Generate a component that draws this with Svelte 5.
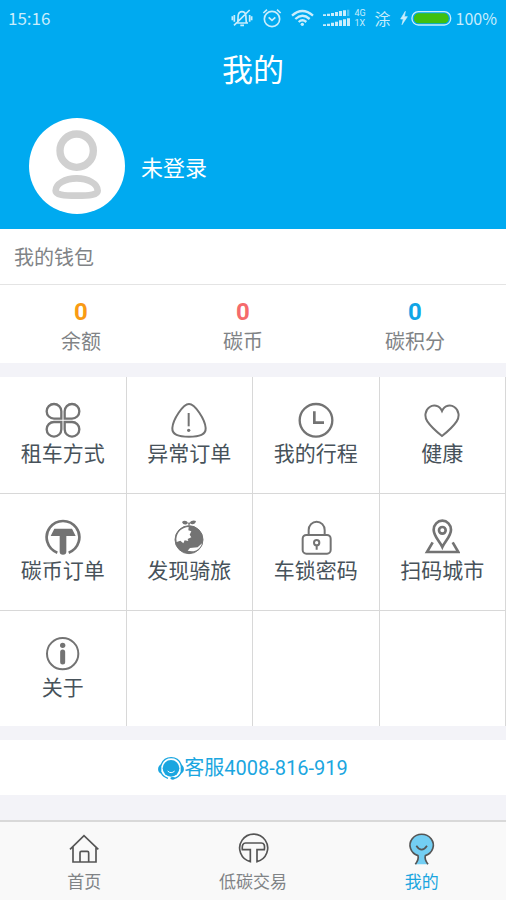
<svelte:head>
    <title>我的</title>
</svelte:head>

<script>
    const wallet = [
        { name: '余额', value: 0, color: 'orange' },
        { name: '碳币', value: 0, color: 'red' },
        { name: '碳积分', value: 0, color: 'blue' },
    ];

    const menu = [
        { name: '租车方式', icon: 'clover' },
        { name: '异常订单', icon: 'alert' },
        { name: '我的行程', icon: 'clock' },
        { name: '健康', icon: 'heart' },
        { name: '碳币订单', icon: 'coin' },
        { name: '发现骑旅', icon: 'globe' },
        { name: '车锁密码', icon: 'lock' },
        { name: '扫码城市', icon: 'pin' },
        { name: '关于', icon: 'info' },
        null,
        null,
        null,
    ];

    const tabs = [
        { name: '首页', icon: 'home' },
        { name: '低碳交易', icon: 'trade' },
        { name: '我的', icon: 'me' },
    ];

    let active = $state('me');
</script>

<div class="page">

    <header>
        <div class="status">
            <span class="time">15:16</span>
            <svg class="bell" viewBox="0 0 66 60" fill="none" stroke="currentColor" stroke-width="5">
                <path d="M15 45H51M19 45C22 40 20 30 22 20C25 8 41 8 44 20C46 30 44 40 47 45M28 52H39M9 52L56 6" />
                <path d="M4 25V37M10 21V41M56 21V41M62 25V37" />
            </svg>
            <svg class="alarm" viewBox="0 0 60 60" fill="none" stroke="currentColor" stroke-width="5">
                <circle cx="30" cy="33" r="23" />
                <path d="M20 28L30 37L40 28M4 15L15 5M45 5L56 15" />
            </svg>
            <svg class="wifi" viewBox="0 0 69 54" fill="none" stroke="currentColor" stroke-width="7">
                <path d="M3 20Q34 -8 66 20M13 30Q34 11 56 30M23 39Q34 29 46 39" />
                <circle cx="34" cy="46" r="5" fill="currentColor" stroke="none" />
            </svg>
            <div class="signal">
                <svg viewBox="0 0 81 54" fill="currentColor">
                    <path d="M0 16h9v5H0zM12 14h9v7h-9zM24 12h9v9h-9zM36 9h9v12h-9zM48 6h9v15h-9zM60 4h9v17h-9z" />
                    <path d="M72 2h7v19h-7z" opacity=".4" />
                    <path d="M0 46h9v5H0zM12 44h9v7h-9zM24 41h9v10h-9zM36 38h9v13h-9zM48 34h9v17h-9zM60 31h9v20h-9zM72 28h9v23h-9z" />
                </svg>
                <div class="network">
                    <span>4G</span>
                    <span>1X</span>
                </div>
            </div>
            <span class="carrier">涂</span>
            <div class="battery">
                <svg viewBox="0 0 156 48">
                    <path d="M16 4L2 27H10L6 44L22 20H13Z" fill="currentColor" stroke="currentColor" stroke-width="2" />
                    <rect x="36" y="5" width="116" height="40" rx="19" fill="none" stroke="currentColor" stroke-width="4" />
                    <rect x="42" y="10" width="104" height="30" rx="14" fill="#3fc010" />
                </svg>
                <span>100%</span>
            </div>
        </div>

        <h1>我的</h1>

        <button class="profile">
            <svg class="avatar" viewBox="0 0 288 288" fill="none" stroke="#d0d0d0">
                <circle cx="144" cy="144" r="144" fill="#fff" stroke="none" />
                <circle cx="143" cy="98" r="50" stroke-width="22" />
                <path d="M80 218C80 198 108 181 143 181C178 181 206 198 206 218C206 230 182 233 143 233C104 233 80 230 80 218Z" stroke-width="20" />
            </svg>
            <span>未登录</span>
        </button>
    </header>

    <main>
        <section class="wallet">
            <h2>我的钱包</h2>
            <div class="amounts">
                {#each wallet as item}
                    <button class="amount">
                        <strong class={item.color}>{item.value}</strong>
                        <span>{item.name}</span>
                    </button>
                {/each}
            </div>
        </section>

        <section class="menu">
            {#each menu as item}
                {#if item}
                    <button class="cell">
                        <svg viewBox="0 0 108 108" fill="none" stroke="currentColor" stroke-width="6">
                            {#if item.icon == 'clover'}
                                <path d="M49 50H27A22 22 0 1 1 49 28ZM59 50V28A22 22 0 1 1 81 50ZM49 60V82A22 22 0 1 1 27 60ZM59 60H81A22 22 0 1 1 59 82Z" stroke-width="7" />
                            {:else if item.icon == 'alert'}
                                <path d="M54 6C72 6 102 52 104 78C105 98 86 104 54 104C22 104 3 98 4 78C6 52 36 6 54 6Z" />
                                <path d="M53 33V73" />
                                <circle cx="53" cy="85" r="5" fill="currentColor" stroke="none" />
                            {:else if item.icon == 'clock'}
                                <circle cx="54" cy="55" r="49" stroke-width="7" />
                                <path d="M49 28V62H78" stroke-width="8" />
                            {:else if item.icon == 'heart'}
                                <path d="M54 27C46 8 27 8 17 15C2 25 1 45 10 58C18 70 34 86 54 102C74 86 90 70 98 58C107 45 106 25 91 15C81 8 62 8 54 27Z" />
                            {:else if item.icon == 'coin'}
                                <path d="M37 101A49 49 0 1 1 71 101" stroke-width="8" />
                                <path d="M28 29H81L92 51H64V98Q64 107 54 107Q44 107 44 98V51H17Z" fill="currentColor" stroke="none" />
                            {:else if item.icon == 'globe'}
                                <circle cx="54" cy="62" r="42" fill="currentColor" stroke-width="3" />
                                <path d="M16 60C18 38 34 25 53 24L52 34L61 37L56 47L61 55L50 60L52 66L41 64L37 73L28 65L17 69ZM50 95L57 87L80 85L93 73C88 90 74 98 62 97Z" fill="#fff" stroke="none" />
                                <path d="M54 20C50 14 51 12 54 10C58 12 58 15 54 20ZM51 12C45 19 36 18 33 9C39 3 48 5 51 12ZM56 12C60 4 69 3 75 6C73 16 63 19 56 12Z" fill="currentColor" stroke="none" />
                            {:else if item.icon == 'lock'}
                                <rect x="14" y="48" width="84" height="56" rx="11" />
                                <path d="M32 48V33A24 25 0 0 1 80 33V48M56 79V92" />
                                <circle cx="56" cy="71" r="8" />
                            {:else if item.icon == 'pin'}
                                <path d="M55 84C48 68 29 52 29 32A26 27 0 0 1 81 32C81 52 62 68 55 84Z" stroke-width="8" />
                                <circle cx="55" cy="34" r="10" stroke-width="8" />
                                <path d="M26 70L9 99H103L86 70" stroke-width="8" />
                            {:else}
                                <circle cx="53" cy="53" r="47" />
                                <circle cx="53" cy="28" r="8" fill="currentColor" stroke="none" />
                                <path d="M53 48V78" stroke-width="15" stroke-linecap="round" />
                            {/if}
                        </svg>
                        <span>{item.name}</span>
                    </button>
                {:else}
                    <div class="cell"></div>
                {/if}
            {/each}
        </section>

        <a class="service" href="tel:4008816919">
            <svg viewBox="0 0 78 72" fill="none" stroke="currentColor" stroke-width="4">
                <path d="M9 26C18 -6 61 -6 70 26M70 46C65 57 57 63 46 65M9 46C13 56 20 61 30 64" />
                <circle cx="39" cy="34" r="25" fill="currentColor" stroke="none" />
                <path d="M10 22V50C-3 46 -3 27 10 22ZM68 22V50C81 46 81 27 68 22Z" fill="currentColor" stroke="none" />
                <ellipse cx="44" cy="64" rx="7" ry="4" fill="currentColor" stroke="none" />
                <path d="M29 42Q39 52 50 42" stroke="#fff" stroke-width="3" />
            </svg>
            <span>客服4008-816-919</span>
        </a>
    </main>

    <nav>
        {#each tabs as tab}
            <a href="#{tab.icon}" class:active={active == tab.icon} onclick={() => active = tab.icon}>
                <svg viewBox="0 0 96 96" fill="none" stroke="#555" stroke-width="5">
                    {#if tab.icon == 'home'}
                        <path d="M6 49L48 8L91 49M15 42V87H84V42M36 87V59Q36 55 40 55H58Q62 55 62 59V87" />
                    {:else if tab.icon == 'trade'}
                        <path d="M40 86A42 42 0 1 1 60 86V50H82Q85 30 73 30H26Q14 30 16 50H40Z" />
                    {:else}
                        <path d="M28 94C35 84 39 77 36 68A35 33 0 1 1 58 68C55 77 59 84 66 94" fill="#73cef3" />
                        <path d="M31 38Q47 62 63 38" />
                    {/if}
                </svg>
                <span>{tab.name}</span>
            </a>
        {/each}
    </nav>

</div>

<style>
    :global(body) {
        margin: 0;
        background: #f3f3f8;
    }
    .page {
        display: flex;
        flex-direction: column;
        min-height: 100vh;
        font-family: Roboto, "Noto Sans CJK SC", sans-serif;
        color: #808386;
    }
    svg {
        display: block;
        flex: none;
    }
    button {
        appearance: none;
        border: none;
        padding: 0;
        font: inherit;
        color: inherit;
        background: none;
    }
    a {
        text-decoration: none;
        color: inherit;
    }
    h1, h2 {
        margin: 0;
        font-weight: 400;
    }

    header {
        background: #00aaf0;
        color: #fff;
    }
    .status {
        display: flex;
        align-items: center;
        gap: 9px;
        height: 36px;
        padding: 0 9px 0 8px;
        font-family: "Noto Sans CJK SC", sans-serif;
        font-size: 17px;
        line-height: 24px;
        color: #c9edfc;
    }
    .time {
        margin-right: auto;
    }
    .bell {
        width: 22px;
        height: 20px;
    }
    .alarm {
        width: 20px;
        height: 20px;
    }
    .wifi {
        width: 23px;
        height: 18px;
    }
    .signal, .battery {
        display: flex;
        align-items: center;
        gap: 4px;
    }
    .signal svg {
        width: 27px;
        height: 18px;
    }
    .network {
        display: flex;
        flex-direction: column;
        font-family: Roboto, sans-serif;
        font-size: 9px;
        line-height: 10px;
    }
    .carrier {
        font-size: 16px;
    }
    .battery {
        font-size: 16px;
    }
    .battery svg {
        width: 52px;
        height: 16px;
    }
    h1 {
        padding-top: 4px;
        font-size: 31px;
        line-height: 62px;
        text-align: center;
    }
    .profile {
        display: flex;
        align-items: center;
        gap: 16px;
        width: 100%;
        padding: 16px 29px 15px;
        font-size: 22px;
    }
    .avatar {
        width: 96px;
        height: 96px;
    }

    .wallet {
        background: #fff;
    }
    h2 {
        padding: 3px 14px 0;
        border-bottom: 1px solid #e4e4e4;
        font-size: 20px;
        line-height: 52px;
    }
    .amounts {
        display: flex;
        justify-content: space-around;
        padding: 12px 0 6px;
    }
    .amount {
        display: flex;
        flex-direction: column;
        align-items: center;
        font-size: 20px;
        line-height: 30px;
    }
    .amount strong {
        font-size: 24px;
    }
    .orange {
        color: #f99b14;
    }
    .red {
        color: #f56a6c;
    }
    .blue {
        color: #10a5e6;
    }

    .menu {
        display: grid;
        grid-template-columns: repeat(4, 1fr);
        margin: 14px 0;
        background: #fff;
    }
    .cell {
        display: flex;
        flex-direction: column;
        align-items: center;
        padding: 25px 0 23px;
        border-right: 1px solid #d8d8d8;
        border-bottom: 1px solid #d8d8d8;
        font-size: 21px;
        line-height: 32px;
        color: #47525a;
    }
    .cell:nth-last-child(-n+4) {
        padding-bottom: 22px;
        border-bottom: none;
    }
    .cell svg {
        width: 36px;
        height: 36px;
        color: #737373;
    }

    .service {
        display: flex;
        align-items: center;
        justify-content: center;
        padding-top: 2px;
        background: #fff;
        font-size: 20px;
        line-height: 53px;
        color: #1ba6e0;
    }
    .service svg {
        width: 26px;
        height: 24px;
    }

    nav {
        display: flex;
        margin-top: auto;
        border-top: 2px solid #d9d9d9;
        background: #f9f9f9;
    }
    nav a {
        display: flex;
        flex: 1;
        flex-direction: column;
        align-items: center;
        padding: 11px 0 1px;
        font-size: 17px;
        line-height: 34px;
    }
    nav svg {
        width: 32px;
        height: 32px;
    }
    .active {
        color: #1ba6e0;
    }
</style>
